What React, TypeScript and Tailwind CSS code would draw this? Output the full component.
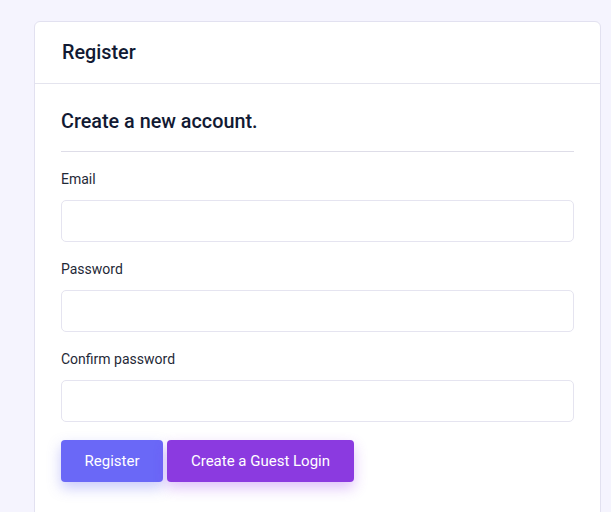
export default function App() {
  return (
    <div className="min-h-[512px] bg-[#f5f4fe] pt-[21px] pl-[34px] font-['Roboto',sans-serif] text-[#121a33]">
      <div className="w-[567px] h-[520px] rounded-t-[6px] border border-[#e2e1f0] bg-white">
        <div className="h-[62px] px-[27px] flex items-center border-b border-[#e4e4ee]">
          <h1 className="text-[19.8px] font-medium">Register</h1>
        </div>
        <div className="px-[26px] pt-[24px]">
          <h2 className="text-[19.8px] font-medium leading-[28px]">Create a new account.</h2>
          <hr className="mt-[15px] border-[#dedde8]" />
          <form className="mt-[17px]" onSubmit={(e) => e.preventDefault()}>
            <Field label="Email" type="email" />
            <Field label="Password" type="password" />
            <Field label="Confirm password" type="password" />
            <div className="mt-[18px] flex gap-[4px]">
              <button className="h-[42px] w-[102px] rounded-[4px] bg-[#6a68f7] text-white text-[15px] shadow-[0_6px_14px_rgba(99,102,241,0.35)]">
                Register
              </button>
              <button
                type="button"
                className="h-[42px] w-[187px] rounded-[4px] bg-[#8b3ae0] text-white text-[15px] shadow-[0_6px_14px_rgba(147,51,234,0.3)]"
              >
                Create a Guest Login
              </button>
            </div>
          </form>
        </div>
      </div>
    </div>
  );
}

function Field({ label, type }: { label: string; type: string }) {
  return (
    <div className="mb-[17px]">
      <label className="block text-[14px] leading-[20px] text-[#1f2937]">{label}</label>
      <input
        type={type}
        className="mt-[11px] block w-full h-[42px] rounded-[5px] border border-[#e5e4f0] bg-white px-3 outline-none"
      />
    </div>
  );
}
